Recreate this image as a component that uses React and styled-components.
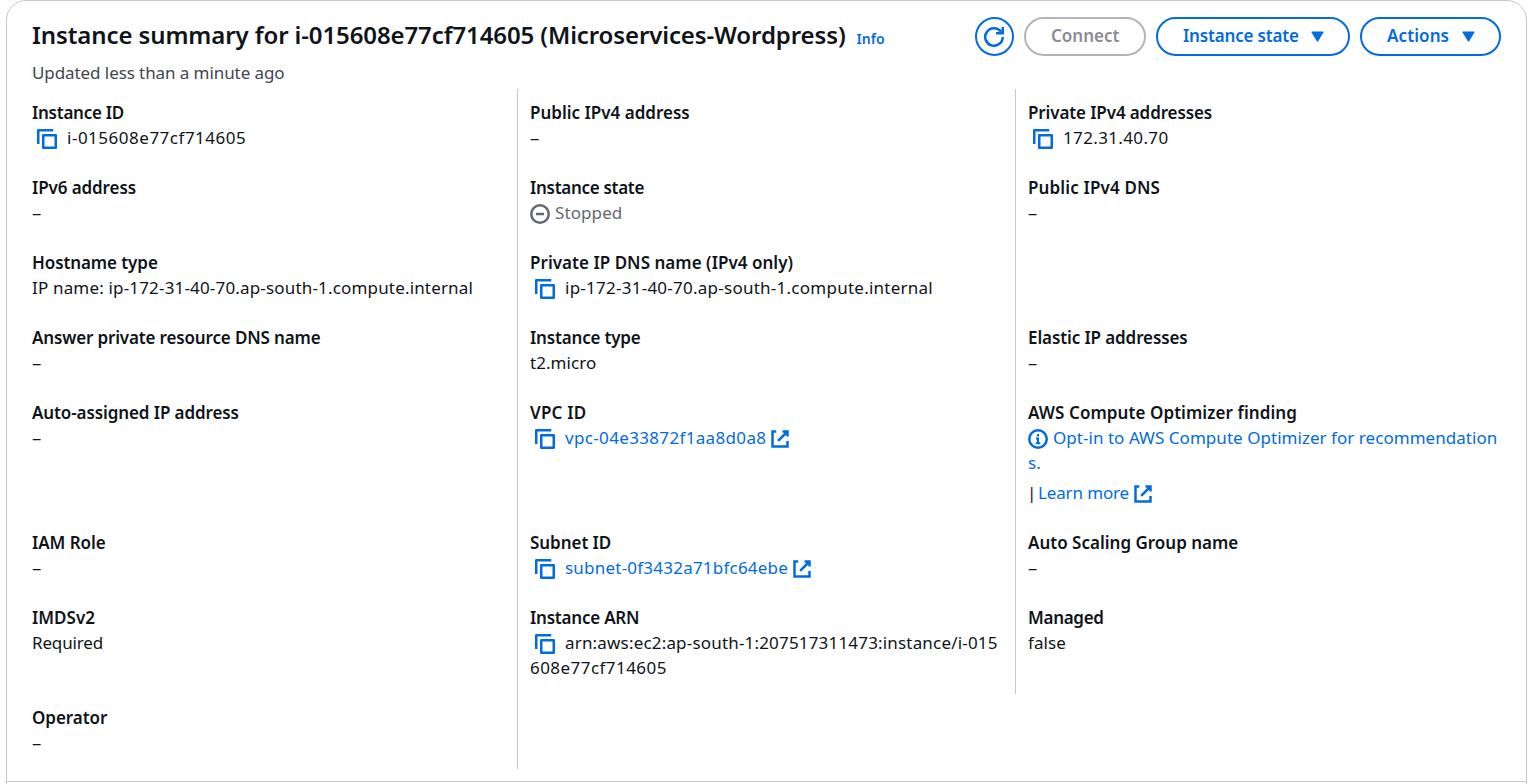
import React from "react";
import styled, { createGlobalStyle } from "styled-components";

const blue = "#006ce0";
const ink = "#0f141a";
const line = "#c6c6cd";

const GlobalStyle = createGlobalStyle`
  * { box-sizing: border-box; }
  body {
    margin: 0;
    background: #fff;
    color: ${ink};
    font-family: "Noto Sans", "Open Sans", sans-serif;
    font-size: 17px;
    line-height: 25px;
    overflow: hidden;
  }
`;

const Page = styled.main`
  height: 784px;
  padding: 0 3px 0 6px;
  overflow: hidden;
`;

const Panel = styled.section`
  height: 820px;
  border: 1px solid ${line};
  border-radius: 20px;
`;

const PanelTop = styled.div`
  height: 781px;
  padding: 16px 25px 0;
  border-bottom: 1px solid ${line};
`;

const Header = styled.header`
  display: flex;
  justify-content: space-between;
  height: 72px;
`;

const TitleRow = styled.div`
  display: flex;
  align-items: baseline;
  gap: 11px;
  height: 38px;
`;

const Title = styled.h2`
  margin: 0;
  font-size: 24px;
  font-weight: 600;
  line-height: 36px;
  letter-spacing: -0.11px;
  white-space: nowrap;
`;

const InfoLink = styled.a`
  color: ${blue};
  font-size: 14px;
  font-weight: 600;
`;

const Updated = styled.p`
  margin: 5px 0 0;
  color: #424650;
  letter-spacing: -0.08px;
`;

const Buttons = styled.div`
  display: flex;
  gap: 10px;
  height: 39px;
`;

const Button = styled.button`
  display: flex;
  align-items: center;
  justify-content: space-between;
  width: ${(p) => p.$width}px;
  height: 39px;
  padding: ${(p) => (p.$round ? "0 8px 0 7px" : "0 24px 0 25px")};
  border: 2px solid ${(p) => (p.disabled ? "#b4b4bb" : blue)};
  border-radius: 20px;
  background: #fff;
  color: ${(p) => (p.disabled ? "#8c8c94" : blue)};
  font: 600 17px/25px "Noto Sans", "Open Sans", sans-serif;
  letter-spacing: ${(p) => p.$track || 0}px;
  white-space: nowrap;
`;

const ButtonText = styled.span`
  margin-bottom: 2px;
`;

const Grid = styled.div`
  display: grid;
  grid-template-columns: 486px 498px 1fr;
  grid-template-rows: repeat(4, 75px) 130px 75px 100px 75px;
`;

const Cell = styled.div`
  min-width: 0;
  padding: 11px 0 0 ${(p) => (p.$first ? 0 : 12)}px;
  border-right: ${(p) => (p.$rule ? `1px solid ${line}` : "0")};
`;

const Label = styled.div`
  font-weight: 600;
  letter-spacing: ${(p) => p.$track || 0}px;
  white-space: nowrap;
`;

const Value = styled.div`
  display: flex;
  height: 25px;
  margin-top: ${(p) => p.$gap || 0}px;
  color: ${(p) => (p.$muted ? "#656871" : ink)};
  white-space: nowrap;
`;

const Text = styled.span`
  letter-spacing: ${(p) => p.$track || 0}px;
`;

const DashText = styled.span`
  font-size: 18.5px;
  line-height: 25px;
`;

const Link = styled.a`
  color: ${blue};
  letter-spacing: ${(p) => p.$track || 0}px;
`;

const Separator = styled.span`
  width: 11px;
  margin-left: -1px;
`;

const Icon = styled.svg`
  flex: none;
  width: 20px;
  height: 20px;
  margin: ${(p) => p.$margin || "0"};
  fill: none;
  stroke: currentColor;
  stroke-width: 2;
`;

const CopyButton = styled.span`
  display: flex;
  padding: 4px 10px 0 5px;
  color: ${blue};
`;

const LinkIcon = styled.span`
  display: flex;
  padding: 4px 0 0 4px;
  color: ${blue};
`;

const Caret = styled.svg`
  width: 13px;
  height: 11px;
  fill: currentColor;
`;

const Copy = () => (
  <CopyButton>
    <Icon viewBox="0 0 16 16" strokeLinejoin="round">
      <path d="M1 12V1h12" />
      <path d="M5 5h10v10H5z" />
    </Icon>
  </CopyButton>
);

const External = () => (
  <LinkIcon>
    <Icon viewBox="0 0 16 16">
      <path d="M10 2h4v4M6.5 9.5 14 2M14 9.5V14H2V2h3" />
    </Icon>
  </LinkIcon>
);

const Refresh = () => (
  <Icon viewBox="0 0 16 16">
    <path d="M15 8a7 7 0 1 1-1.4-4.2M9.6 5H15V0" />
  </Icon>
);

const Stopped = () => (
  <Icon viewBox="0 0 16 16" $margin="4px 5px 0 0">
    <circle cx="8" cy="8" r="7" />
    <path d="M4.8 8h6.4" />
  </Icon>
);

const InfoIcon = () => (
  <Icon viewBox="0 0 16 16" $margin="4px 5px 0 0">
    <circle cx="8" cy="8" r="7" />
    <path d="M8 4v2M6.4 7.6H8v3.9M6.2 11.4h3.6" strokeWidth="1.7" />
  </Icon>
);

const Down = () => (
  <Caret viewBox="0 0 13 11">
    <path d="M1.1.5h10.8q1 .1.5 1.1L7.3 10q-.8 1-1.6 0L.6 1.6Q.1.6 1.1.5z" />
  </Caret>
);

const Dash = () => (
  <Value>
    <DashText>–</DashText>
  </Value>
);

const Field = ({ label, track, col, children }) => (
  <Cell $first={col === 1} $rule={col !== 3}>
    <Label $track={track}>{label}</Label>
    {children || <Dash />}
  </Cell>
);

export default function App() {
  return (
    <Page>
      <GlobalStyle />
      <Panel>
        <PanelTop>
          <Header>
            <div>
              <TitleRow>
                <Title>Instance summary for i-015608e77cf714605 (Microservices-Wordpress)</Title>
                <InfoLink>Info</InfoLink>
              </TitleRow>
              <Updated>Updated less than a minute ago</Updated>
            </div>
            <Buttons>
              <Button $width={39} $round aria-label="Refresh"><Refresh /></Button>
              <Button $width={122} disabled><ButtonText>Connect</ButtonText></Button>
              <Button $width={194} $track={-0.17}><ButtonText>Instance state</ButtonText><Down /></Button>
              <Button $width={141} $track={0.1}><ButtonText>Actions</ButtonText><Down /></Button>
            </Buttons>
          </Header>
          <Grid>
            <Field col={1} label="Instance ID" track={-0.26}>
              <Value><Copy /><Text $track={0.51}>i-015608e77cf714605</Text></Value>
            </Field>
            <Field col={2} label="Public IPv4 address" />
            <Field col={3} label="Private IPv4 addresses" track={-0.12}>
              <Value><Copy /><Text $track={0.36}>172.31.40.70</Text></Value>
            </Field>

            <Field col={1} label="IPv6 address" track={-0.1} />
            <Field col={2} label="Instance state" track={-0.29}>
              <Value $muted><Stopped /><Text $track={0.1}>Stopped</Text></Value>
            </Field>
            <Field col={3} label="Public IPv4 DNS" track={0.14} />

            <Field col={1} label="Hostname type" track={-0.09}>
              <Value><Text $track={0.17}>IP name: ip-172-31-40-70.ap-south-1.compute.internal</Text></Value>
            </Field>
            <Field col={2} label="Private IP DNS name (IPv4 only)" track={0.03}>
              <Value><Copy /><Text $track={0.25}>ip-172-31-40-70.ap-south-1.compute.internal</Text></Value>
            </Field>
            <Cell />

            <Field col={1} label="Answer private resource DNS name" track={-0.15} />
            <Field col={2} label="Instance type" track={-0.18}>
              <Value><Text $track={0.06}>t2.micro</Text></Value>
            </Field>
            <Field col={3} label="Elastic IP addresses" track={-0.11} />

            <Field col={1} label="Auto-assigned IP address" track={-0.1} />
            <Field col={2} label="VPC ID" track={0.2}>
              <Value><Copy /><Link $track={0.34}>vpc-04e33872f1aa8d0a8</Link><External /></Value>
            </Field>
            <Field col={3} label="AWS Compute Optimizer finding" track={0.07}>
              <Value><Link><InfoIcon /></Link><Link $track={0.04}>Opt-in to AWS Compute Optimizer for recommendation</Link></Value>
              <Value><Link>s.</Link></Value>
              <Value $gap={5}><Separator>|</Separator><Link $track={-0.14}>Learn more</Link><External /></Value>
            </Field>

            <Field col={1} label="IAM Role" track={-0.05} />
            <Field col={2} label="Subnet ID" track={-0.05}>
              <Value><Copy /><Link $track={0.22}>subnet-0f3432a71bfc64ebe</Link><External /></Value>
            </Field>
            <Field col={3} label="Auto Scaling Group name" />

            <Field col={1} label="IMDSv2">
              <Value><Text $track={-0.15}>Required</Text></Value>
            </Field>
            <Field col={2} label="Instance ARN" track={-0.22}>
              <Value><Copy /><Text $track={0.18}>arn:aws:ec2:ap-south-1:207517311473:instance/i-015</Text></Value>
              <Value><Text $track={0.45}>608e77cf714605</Text></Value>
            </Field>
            <Field col={3} label="Managed" track={-0.3}>
              <Value><Text $track={0.1}>false</Text></Value>
            </Field>

            <Field col={1} label="Operator" track={-0.05} />
          </Grid>
        </PanelTop>
      </Panel>
    </Page>
  );
}
